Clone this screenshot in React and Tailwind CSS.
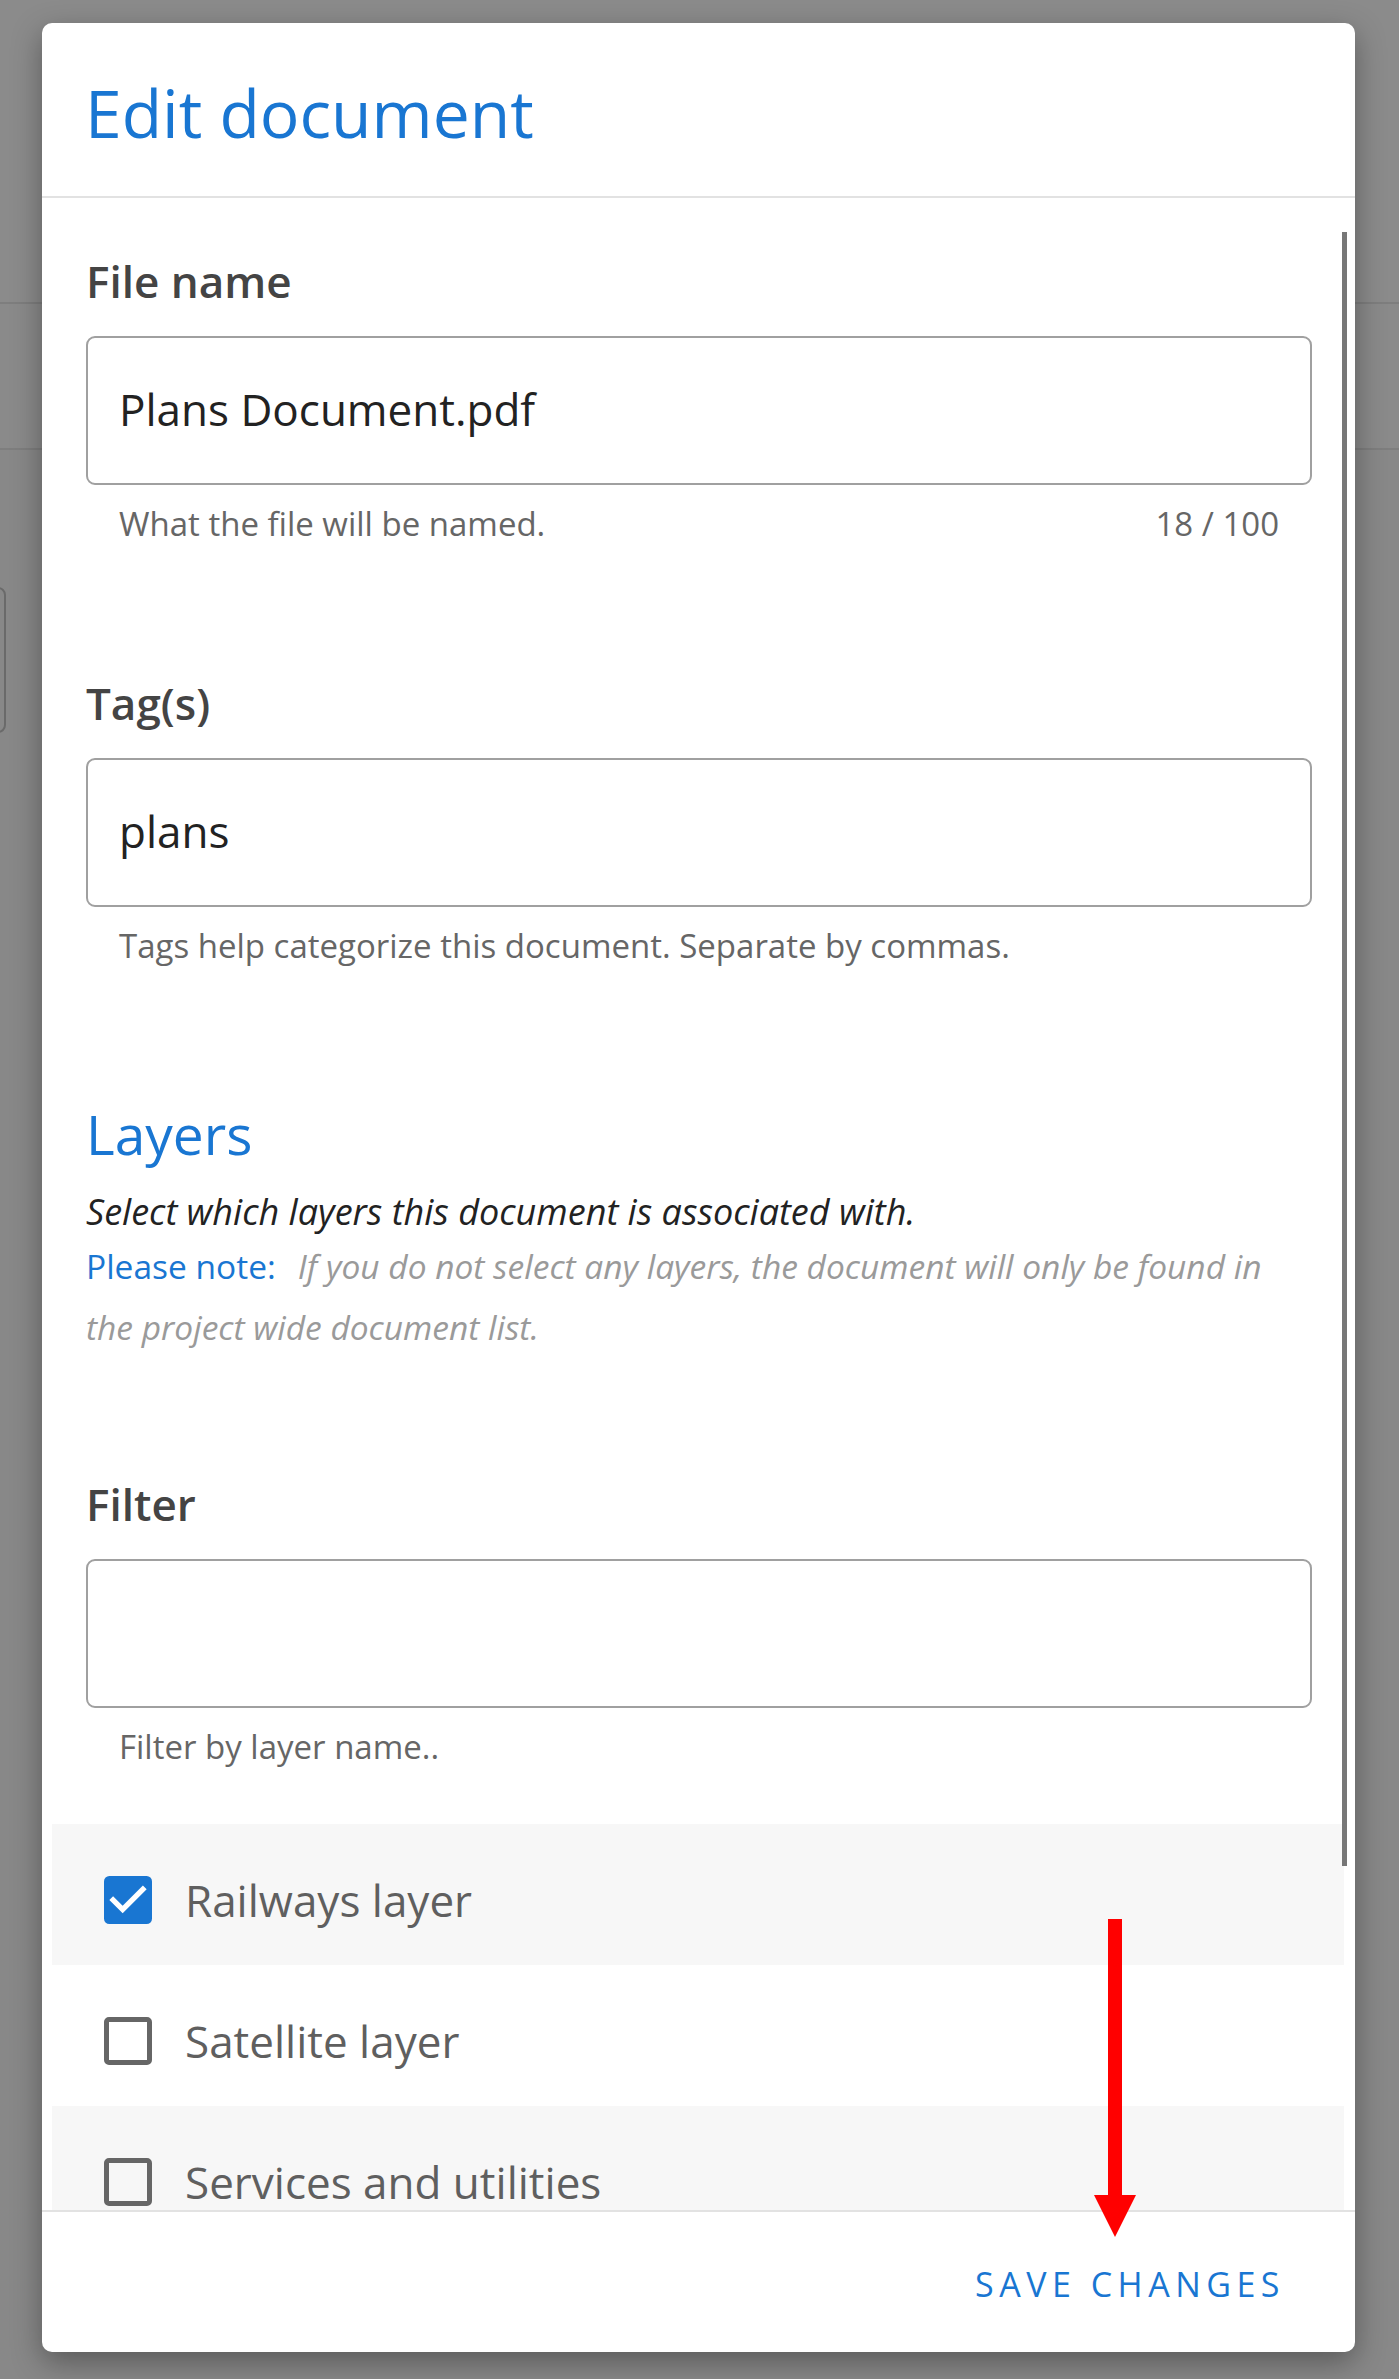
import React from "react";

const layers = [
  { name: "Railways layer", checked: true },
  { name: "Satellite layer", checked: false },
  { name: "Services and utilities", checked: false },
];

function Box({ checked }) {
  if (checked) {
    return (
      <svg viewBox="3 3 18 18" className="h-[48px] w-[48px] shrink-0">
        <rect x="3" y="3" width="18" height="18" rx="2" fill="#1976d2" />
        <path d="M10 17l-5-5 1.41-1.41L10 14.17l7.59-7.59L19 8l-9 9z" fill="#fff" />
      </svg>
    );
  }
  return <div className="h-[48px] w-[48px] shrink-0 rounded-[5px] border-[5px] border-[#666]" />;
}

function Field({ label, value, helper, counter, gapTop }) {
  return (
    <div className={gapTop}>
      <div className="text-[44px] leading-none font-semibold text-[#444]">{label}</div>
      <div className="mt-[33px] flex h-[149px] items-center rounded-[9px] border-2 border-[#a0a0a0] px-[31px] pb-[3px]">
        <span className="text-[44px] leading-none text-[#222]">{value}</span>
      </div>
      <div className="mt-[22px] flex justify-between px-[33px] text-[33px] leading-none text-[#666]">
        <span>{helper}</span>
        {counter && <span>{counter}</span>}
      </div>
    </div>
  );
}

export default function App() {
  return (
    <div className="relative h-[2379px] w-full overflow-hidden bg-[#888] font-['Open_Sans',sans-serif]">
      {/* page behind the overlay */}
      <div className="h-[304px] border-b-2 border-[#7e7e7e] bg-[#8b8b8b]" />
      <div className="h-[146px] border-b-2 border-[#7e7e7e] bg-[#8a8a8a]" />
      <div className="ml-[-10px] mt-[137px] h-[146px] w-[16px] rounded-[8px] border-2 border-[#6a6a6a]" />

      {/* dialog */}
      <div className="absolute left-[42px] top-[23px] flex h-[2329px] w-[1313px] flex-col overflow-hidden rounded-[10px] bg-white shadow-[0_10px_30px_rgba(0,0,0,0.35)]">
        <div className="h-[175px] shrink-0 border-b-2 border-[#e2e2e2] px-[43px] pt-[56px]">
          <h1 className="text-[66px] leading-none font-normal text-[#1976d2]">Edit document</h1>
        </div>

        <div className="relative flex-1 overflow-hidden">
          <div className="absolute right-[8px] top-[34px] h-[1634px] w-[5px] bg-[#777]" />

          <div className="pl-[44px] pr-[43px] pt-[61px]">
            <Field label="File name" value="Plans Document.pdf" helper="What the file will be named." counter="18 / 100" />
            <Field label="Tag(s)" value="plans" helper="Tags help categorize this document. Separate by commas." gapTop="mt-[141px]" />

            <h2 className="mt-[144px] text-[55px] leading-none font-normal text-[#1976d2]">Layers</h2>
            <p className="mt-[31px] text-[36px] leading-[40px] italic text-[#222]">Select which layers this document is associated with.</p>
            <p className="mt-[4px] pr-[14px] text-[33.5px] leading-[61px] text-[#9a9a9a]">
              <span className="mr-[22px] text-[#1976d2]">Please note:</span>
              <span className="italic">If you do not select any layers, the document will only be found in the project wide document list.</span>
            </p>

            <Field label="Filter" value="" helper="Filter by layer name.." gapTop="mt-[124px]" />
          </div>

          <div className="ml-[10px] mr-[11px] mt-[61px]">
            {layers.map((l, i) => (
              <div key={l.name} className={`flex h-[141px] items-center gap-[33px] pl-[52px] pt-[10px] ${i % 2 === 0 ? "bg-[#f7f7f7]" : "bg-white"}`}>
                <Box checked={l.checked} />
                <span className="text-[44px] leading-none text-[#5f5f5f]">{l.name}</span>
              </div>
            ))}
          </div>
        </div>

        <div className="flex h-[142px] shrink-0 items-center justify-end border-t-2 border-[#e2e2e2] pr-[70px]">
          <button className="pt-[3px] text-[34px] leading-none tracking-[5.5px] text-[#1976d2] uppercase">Save changes</button>
        </div>
      </div>

      {/* red annotation arrow */}
      <div className="absolute left-[1094px] top-[1919px] flex w-[42px] flex-col items-center">
        <div className="h-[276px] w-[14px] bg-[#ff0000]" />
        <svg width="42" height="42" viewBox="0 0 42 42" className="block">
          <polygon points="0,0 42,0 21,42" fill="#ff0000" />
        </svg>
      </div>
    </div>
  );
}
